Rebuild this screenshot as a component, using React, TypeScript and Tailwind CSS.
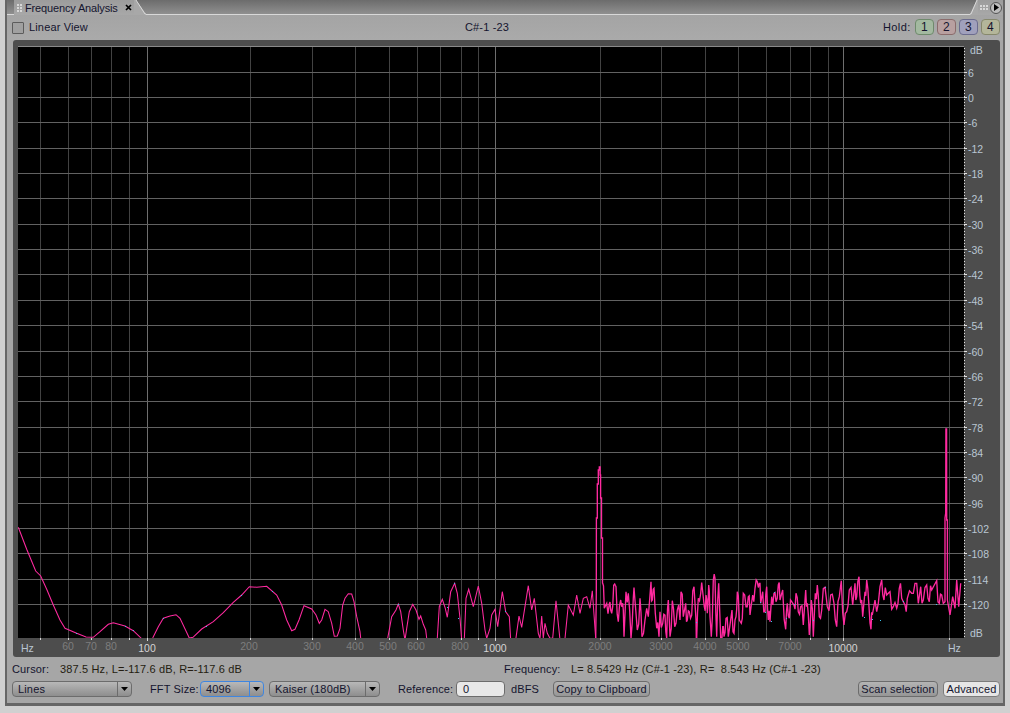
const font = { fontFamily: '"Liberation Sans", Arial, sans-serif' };

// plot is drawn in page coordinates inside an svg that starts at the panel corner
const PX = 13;
const PY = 40;

const minorX = [40.5, 68.5, 91.5, 111.5, 129.5, 250.5, 312.5, 355.5, 389.5, 417.5, 440.5, 461.5, 478.5, 600.5, 661.5, 705.5, 738.5, 766.5, 790.5, 810.5, 828.5, 949.5];
const majorX = [147.5, 495.5, 843.5];
const dbLabels = [6, 0, -6, -12, -18, -24, -30, -36, -42, -48, -54, -60, -66, -72, -78, -84, -90, -96, -102, -108, -114, -120];
const dbY = (db: number) => Math.round(97 - db * 4.225) + 0.5;

const freqLabels: [string, number][] = [
  ["60", 68], ["70", 91], ["80", 111], ["200", 249], ["300", 312], ["400", 355], ["500", 388], ["600", 416],
  ["800", 460], ["2000", 600], ["3000", 661], ["4000", 705], ["5000", 738], ["7000", 790],
];
const freqMajor: [string, number][] = [["100", 147], ["1000", 495], ["10000", 843]];

// low end of the trace, page coordinates
const lowEnd = [
  [18.3, 527.3], [26.7, 549.3], [35.7, 571], [40.7, 576], [46.7, 589.3], [53.3, 605], [60, 620], [65, 628.3], [76.7, 633.3],
  [86, 637], [93.3, 637.3], [100, 631.7], [108.3, 624.3], [113.3, 622.7], [125, 626], [133.3, 630.7], [141, 638], [147, 646],
  [152.7, 638], [158.3, 626.7], [163.3, 618.3], [170, 616], [176, 614.7], [180, 618.3], [189.3, 638], [193, 637.3], [201.7, 629],
  [213.3, 621.7], [223.3, 612.7], [233.3, 602.3], [241.7, 595], [249.3, 586.7], [256.7, 587.3], [266.7, 586.3], [276.7, 595],
  [281.7, 605], [286.7, 620], [291.7, 630.7], [295, 629.3], [299, 620], [304, 605.7], [311.7, 609], [316, 615], [319.3, 623.3],
  [321.7, 620], [325, 609.3], [328.3, 611.7], [331.7, 623.3], [334.3, 636.3], [337.3, 636],
];
// mid band, read from the crop at (340,540), 3x
const midBand = [
  [0, 265], [8, 195], [15, 175], [25, 161], [35, 162], [42, 185], [50, 230], [60, 275], [62, 295], [64, 320], [140, 320], [143, 295], [155, 230],
  [168, 210], [175, 192], [182, 215], [190, 270], [195, 300], [200, 265], [208, 215], [218, 193], [228, 210], [237, 238], [242, 228],
  [250, 253], [257, 270], [260, 295], [262, 320], [290, 320], [292, 295], [298, 200], [307, 178], [316, 205], [322, 232], [332, 155], [344, 130],
  [352, 160], [360, 235], [365, 300], [373, 300], [378, 175], [386, 148], [400, 200], [415, 138], [425, 190], [435, 270], [440, 295],
  [450, 265], [455, 225], [465, 208], [473, 260], [487, 155], [497, 215], [508, 230], [512, 300], [527, 300], [537, 228], [545, 262],
  [565, 137], [575, 210], [583, 175], [595, 280], [600, 295], [605, 228], [610, 295], [615, 250], [622, 280], [630, 295], [638, 295], [648, 182], [660, 300],
  [675, 295], [685, 195], [700, 225], [710, 165], [720, 220], [730, 175], [740, 170], [750, 205], [757, 152], [767, 295],
].map(([x, y]) => [340 + x / 3, 540 + y / 3]);
// the 2 kHz spike
const spike2k = [
  [596.3, 594], [596.4, 518], [597.3, 518], [597.3, 484], [598.3, 484], [598.3, 470], [599.3, 470], [599.3, 467], [600.1, 467],
  [600.1, 475], [600.6, 475], [600.6, 498], [601.5, 498], [601.5, 538], [602.5, 538], [602.5, 583],
];
const noiseA = [
  [788, 130], [793, 205], [800, 190], [808, 192], [812, 210], [818, 200], [824, 132], [828, 140], [835, 245], [842, 180], [848, 190],
  [852, 290], [858, 155], [865, 160], [873, 295], [880, 175], [884, 170], [892, 270], [900, 175], [906, 290], [915, 240], [925, 230],
  [933, 125], [937, 180], [942, 145], [950, 265], [957, 290], [960, 215], [968, 250], [975, 225], [980, 295], [985, 180], [990, 290],
  [997, 182], [1004, 260], [1012, 210], [1020, 240],
].map(([x, y]) => [340 + x / 3, 540 + y / 3]);
// high band, read from the crop at (670,540), 3x
const noiseB = [
  [33, 155], [40, 230], [47, 190], [52, 240], [58, 215], [65, 225], [72, 140], [78, 240], [80, 295], [85, 175], [92, 160], [98, 155],
  [103, 200], [108, 165], [112, 220], [116, 135], [120, 230], [124, 290], [130, 120], [135, 115], [140, 290], [146, 130], [152, 295],
  [158, 260], [162, 290], [168, 235], [175, 290], [186, 210], [192, 280], [198, 230], [202, 155], [208, 240], [214, 250], [220, 160],
  [228, 200], [235, 170], [240, 225], [248, 165], [255, 145], [262, 125], [268, 130], [272, 190], [278, 155], [285, 215], [290, 140],
  [295, 240], [300, 245], [305, 170], [312, 160], [318, 185], [325, 135], [330, 180], [338, 150], [347, 268], [352, 190], [358, 235],
  [365, 185], [372, 195], [378, 160], [385, 215], [392, 200], [400, 255], [407, 150], [412, 190], [418, 285], [424, 180], [430, 290],
  [436, 160], [442, 135], [448, 230], [455, 210], [465, 142], [472, 200], [482, 165], [492, 190], [500, 260], [508, 170], [514, 122],
  [522, 255], [530, 215], [538, 150], [548, 195], [555, 130], [560, 170], [567, 110], [572, 190], [578, 230], [585, 155], [590, 120],
  [597, 200], [603, 268], [607, 225], [615, 180], [625, 190], [635, 120], [642, 180], [650, 165], [660, 155], [670, 200], [680, 205],
  [688, 145], [695, 175], [705, 195], [712, 175], [725, 160], [735, 130], [745, 190], [752, 140], [760, 180], [770, 135], [778, 185],
  [785, 150], [800, 122], [808, 190], [815, 165], [825, 185],
].map(([x, y]) => [670 + x / 3, 540 + y / 3]);
const spike18k = [[945, 600], [945, 518], [945.7, 513], [945.9, 429], [946.6, 429], [946.7, 520], [947.4, 520], [947.4, 600]];
const tail = [
  [840, 225], [848, 170], [855, 205], [860, 120], [866, 200], [872, 130],
].map(([x, y]) => [670 + x / 3, 540 + y / 3]);

// the crops only give the main peaks, put a small wiggle between them so the band is as dense as the original
const roughen = (pts: number[][]) =>
  pts.flatMap((p, i) => {
    const next = pts[i + 1];
    if (!next) return [p];
    const wiggle = ((i * 7) % 5) - 2;
    return [p, [(p[0] + next[0]) / 2, (p[1] + next[1]) / 2 + wiggle * 5]];
  });

const toPoints = (pts: number[][]) => pts.map(([x, y]) => `${(x - PX).toFixed(1)},${(y - PY).toFixed(1)}`).join(" ");

const smoothTrace = toPoints([...lowEnd, ...midBand]);
const noiseTrace = toPoints([[595.7, 638], ...spike2k, ...roughen(noiseA), ...roughen(noiseB), ...spike18k, ...tail]);

const cyanDots = [
  [76, 633], [125, 626], [133, 630], [163, 618], [206, 626], [241, 595], [272, 591], [398, 604], [447, 607], [454, 583], [458, 618], [505, 611],
  [696, 622], [760, 602], [765, 612], [771, 621], [774, 592], [786, 618], [794, 604], [813, 620], [825, 587], [864, 617], [872, 619], [880, 620], [903, 601],
  [936, 604],
];

function Plot() {
  const dots = [];
  for (let y = 48; y < 638; y += 3) dots.push(y);
  return (
    <svg width={987} height={617} className="block" style={font}>
      <rect x={5} y={6} width={946} height={592} fill="#000" />
      <g shapeRendering="crispEdges">
        {minorX.map((x) => (
          <line key={x} x1={x - PX} x2={x - PX} y1={6} y2={598} stroke="#424242" />
        ))}
        {majorX.map((x) => (
          <line key={x} x1={x - PX} x2={x - PX} y1={6} y2={598} stroke="#6e6e6e" />
        ))}
        <line x1={5} x2={951} y1={6.5} y2={6.5} stroke="#8a8a8a" />
        {dbLabels.map((db) => (
          <line key={db} x1={5} x2={951} y1={dbY(db) - PY} y2={dbY(db) - PY} stroke="#626262" />
        ))}
      </g>
      <svg x={5} y={6} width={946} height={592}>
        <g transform="translate(-5,-6)" fill="none" stroke="#ff2aa0" strokeLinejoin="miter">
          <polyline points={smoothTrace} strokeWidth={1.05} />
          <polyline points={noiseTrace} strokeWidth={1.35} />
        </g>
        {cyanDots.map(([x, y]) => (
          <rect key={`${x}-${y}`} x={x - PX - 5} y={y - PY - 6} width={1} height={1} fill="#3ec4f0" />
        ))}
      </svg>
      <g shapeRendering="crispEdges">
        {dots.map((y) => (
          <rect key={y} x={951} y={y - PY} width={1} height={1} fill="#e0e0e0" />
        ))}
        {dbLabels.map((db) => (
          <rect key={db} x={951} y={dbY(db) - PY - 0.5} width={3} height={1} fill="#e0e0e0" />
        ))}
        {[...minorX, ...majorX].map((x) => (
          <rect key={x} x={x - PX - 0.5} y={598} width={1} height={majorX.includes(x) ? 3 : 2} fill="#d8d8d8" />
        ))}
      </g>
      <g fontSize={10.5} fill="#b9c6d2">
        <text x={957} y={14}>dB</text>
        {dbLabels.map((db) => (
          <text key={db} x={955} y={dbY(db) - PY + 4}>
            {db}
          </text>
        ))}
        <text x={957} y={597}>dB</text>
        <text x={8} y={612}>Hz</text>
        <text x={935} y={612}>Hz</text>
      </g>
      <g fontSize={10.5} fill="#7d7d7d" textAnchor="middle">
        {freqLabels.map(([t, x]) => (
          <text key={t} x={x - PX} y={610}>{t}</text>
        ))}
      </g>
      <g fontSize={10.5} fill="#d4d4d4" textAnchor="middle">
        {freqMajor.map(([t, x]) => (
          <text key={t} x={x - PX} y={612}>{t}</text>
        ))}
      </g>
    </svg>
  );
}

function Arrow() {
  return (
    <svg width={7} height={4} viewBox="0 0 7 4" className="block">
      <path d="M0 0h7L3.5 4z" fill="#000" />
    </svg>
  );
}

function Select({ label, w, focus }: { label: string; w: string; focus?: boolean }) {
  return (
    <div
      className={`${w} h-[16px] flex rounded-[4px] border bg-gradient-to-b from-[#b8b8b8] to-[#8e8e8e] text-[11px] tracking-[0.15px] leading-[14px] text-[#14142e] ${
        focus ? "border-[#3f86e0]" : "border-[#6c6c6c]"
      }`}
    >
      <div className="flex-1 pl-[5px] whitespace-nowrap overflow-hidden">{label}</div>
      <div className={`w-[14px] border-l flex items-center justify-center ${focus ? "border-[#3f86e0]" : "border-[#6c6c6c]"}`}>
        <Arrow />
      </div>
    </div>
  );
}

function Btn({ label, w, light }: { label: string; w: string; light?: boolean }) {
  return (
    <div
      className={`${w} h-[16px] rounded-[4px] border text-center text-[11px] tracking-[0.15px] leading-[14px] text-[#14142e] ${
        light ? "border-[#7c7c7c] bg-[#e6e6e6]" : "border-[#6c6c6c] bg-gradient-to-b from-[#b4b4b4] to-[#969696]"
      }`}
    >
      {label}
    </div>
  );
}

function HoldBtn({ n, cls }: { n: number; cls: string }) {
  return (
    <div className={`w-[19px] h-[16px] rounded-[4px] border text-center text-[12px] leading-[14px] text-[#14142e] ${cls}`}>{n}</div>
  );
}

export default function App() {
  return (
    <div className="w-[1010px] h-[713px] bg-[#d0d0d0] px-[5px] pb-[2px] overflow-hidden" style={font}>
      <div className="h-[706px] flex flex-col border-x-2 border-b-[3px] border-[#666666] bg-[#a6a6a6]">
        {/* tab strip */}
        <div className="h-[15px] flex shrink-0 bg-gradient-to-b from-[#6c6c6c] to-[#929292]">
          <div className="w-[7px] border-b border-[#d8d8d8]" />
          <div className="w-[120px] flex items-center bg-gradient-to-b from-[#9c9c9c] to-[#a8a8a8] pl-[3px]">
            <div className="grid grid-cols-2 gap-[1px] mr-[3px]">
              {[0, 1, 2, 3, 4, 5].map((i) => (
                <div key={i} className="w-[2px] h-[2px] bg-[#d8d8d8]" />
              ))}
            </div>
            <span className="w-[100px] text-[11px] tracking-[-0.15px] leading-[14px] text-[#14142e] whitespace-nowrap">Frequency Analysis</span>
            <svg width={7} height={7} viewBox="0 0 7 7" className="block">
              <path d="M1 1l5 5M6 1L1 6" stroke="#000" strokeWidth={1.7} fill="none" />
            </svg>
          </div>
          <svg width={12} height={15} className="block shrink-0">
            <path d="M0 0h2L12 14v1H0z" fill="#a8a8a8" />
            <path d="M2 0L11 14h1" fill="none" stroke="#d8d8d8" />
          </svg>
          <div className="flex-1 border-b border-[#d8d8d8]" />
          <svg width={8} height={15} className="block shrink-0">
            <path d="M8 0H7L0 14v1h8z" fill="#a8a8a8" />
            <path d="M7 0L1 14H0" fill="none" stroke="#d8d8d8" />
          </svg>
          <div className="w-[25px] flex items-center bg-gradient-to-b from-[#9c9c9c] to-[#a8a8a8] pl-[2px]">
            <div className="grid grid-cols-3 gap-[1px] mr-[2px]">
              {[0, 1, 2, 3, 4, 5].map((i) => (
                <div key={i} className="w-[2px] h-[2px] bg-[#d8d8d8]" />
              ))}
            </div>
            <div className="w-[12px] h-[12px] rounded-full border border-[#555555] bg-[#bdbdbd] flex items-center justify-center">
              <svg width={5} height={7} viewBox="0 0 5 7" className="block">
                <path d="M0 0l5 3.5L0 7z" fill="#000" />
              </svg>
            </div>
          </div>
        </div>
        {/* top controls */}
        <div className="h-[25px] shrink-0 flex items-center pl-[5px] bg-gradient-to-b from-[#a4a4a4] to-[#aaaaaa] text-[11px] tracking-[0.15px] text-[#14142e]">
          <div className="w-[12px] h-[12px] shrink-0 rounded-[1px] border border-[#5c5c5c] bg-[#a0a0a0]" />
          <span className="ml-[5px] w-[436px] shrink-0">Linear View</span>
          <span className="w-[418px] shrink-0">C#-1 -23</span>
          <span className="w-[32px] shrink-0 tracking-[0.4px]">Hold:</span>
          <div className="flex gap-[3px] mb-[1px]">
            <HoldBtn n={1} cls="bg-[#a3b9a0] border-[#6f8a6c]" />
            <HoldBtn n={2} cls="bg-[#b8a0a0] border-[#8a6c6c]" />
            <HoldBtn n={3} cls="bg-[#a0a0bc] border-[#6c6c8e]" />
            <HoldBtn n={4} cls="bg-[#b4b69a] border-[#86886c]" />
          </div>
        </div>
        {/* plot */}
        <div className="ml-[6px] w-[987px] h-[617px] shrink-0 rounded-[3px] bg-[#4d4d4d]">
          <Plot />
        </div>
        {/* read-outs */}
        <div className="h-[24px] shrink-0 flex items-center pl-[5px] text-[11px] tracking-[0.15px] text-[#14142e] whitespace-nowrap">
          <span className="w-[48px]">Cursor:</span>
          <span className="w-[444px] text-[#241c10]">387.5 Hz, L=-117.6 dB, R=-117.6 dB</span>
          <span className="w-[67px]">Frequency:</span>
          <span className="text-[#241c10]">L= 8.5429 Hz (C#-1 -23), R=&nbsp; 8.543 Hz (C#-1 -23)</span>
        </div>
        <div className="flex items-center pl-[5px] whitespace-nowrap text-[11px] tracking-[0.15px] text-[#14142e]">
          <Select label="Lines" w="w-[120px]" />
          <span className="ml-[18px] w-[50px]">FFT Size:</span>
          <Select label="4096" w="w-[64px]" focus />
          <div className="w-[5px]" />
          <Select label="Kaiser (180dB)" w="w-[111px]" />
          <span className="ml-[18px] w-[58px]">Reference:</span>
          <div className="w-[49px] h-[16px] rounded-[4px] border border-[#6c6c6c] bg-[#e8e8e8] pl-[6px] leading-[14px]">0</div>
          <span className="ml-[6px] w-[42px]">dBFS</span>
          <Btn label="Copy to Clipboard" w="w-[97px]" />
          <div className="w-[208px]" />
          <Btn label="Scan selection" w="w-[80px]" />
          <div className="w-[5px]" />
          <Btn label="Advanced" w="w-[57px]" light />
        </div>
      </div>
    </div>
  );
}
